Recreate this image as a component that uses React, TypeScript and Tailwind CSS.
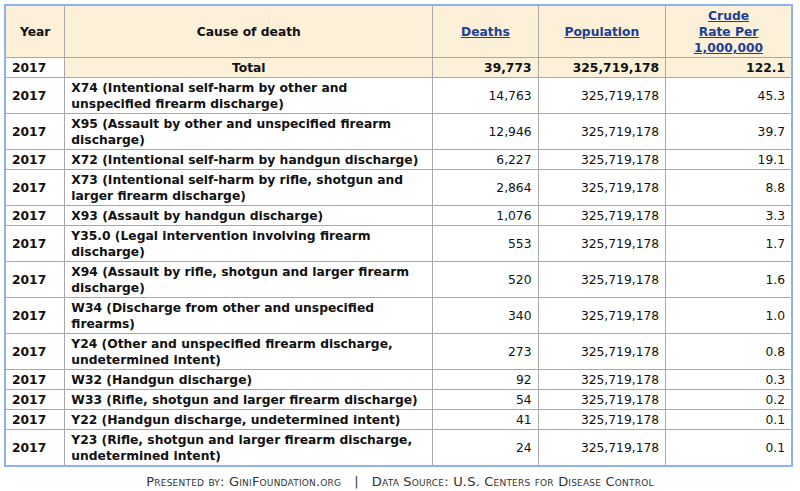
import React from "react";

const rows: [React.ReactNode, string, string][] = [
  [<>X74 (Intentional self-harm by other and<br />unspecified firearm discharge)</>, "14,763", "45.3"],
  [<>X95 (Assault by other and unspecified firearm<br />discharge)</>, "12,946", "39.7"],
  [<>X72 (Intentional self-harm by handgun discharge)</>, "6,227", "19.1"],
  [<>X73 (Intentional self-harm by rifle, shotgun and<br />larger firearm discharge)</>, "2,864", "8.8"],
  [<>X93 (Assault by handgun discharge)</>, "1,076", "3.3"],
  [<>Y35.0 (Legal intervention involving firearm<br />discharge)</>, "553", "1.7"],
  [<>X94 (Assault by rifle, shotgun and larger firearm<br />discharge)</>, "520", "1.6"],
  [<>W34 (Discharge from other and unspecified<br />firearms)</>, "340", "1.0"],
  [<>Y24 (Other and unspecified firearm discharge,<br />undetermined intent)</>, "273", "0.8"],
  [<>W32 (Handgun discharge)</>, "92", "0.3"],
  [<>W33 (Rifle, shotgun and larger firearm discharge)</>, "54", "0.2"],
  [<>Y22 (Handgun discharge, undetermined intent)</>, "41", "0.1"],
  [<>Y23 (Rifle, shotgun and larger firearm discharge,<br />undetermined intent)</>, "24", "0.1"],
];

const cell = "border border-[#a8a8a8] px-[6px] pt-[2px] pb-[1px] leading-[16px]";

export default function App() {
  return (
    <div className="w-[800px] h-[491px] bg-white pt-[4px] pl-[4px]" style={{ fontFamily: '"DejaVu Sans", Verdana, sans-serif' }}>
      <table className="w-[789px] border-collapse border-2 border-[#8fb3e8] text-[12.3px] text-[#111]">
        <colgroup>
          <col className="w-[60px]" />
          <col className="w-[368px]" />
          <col className="w-[106px]" />
          <col className="w-[128px]" />
          <col className="w-[127px]" />
        </colgroup>
        <thead>
          <tr className="bg-[#fdf0d9]">
            <th className={`${cell} text-center font-bold`}>Year</th>
            <th className={`${cell} text-center font-bold`}>Cause of death</th>
            <th className={`${cell} text-center font-bold`}><span className="text-[#1c3f94] underline">Deaths</span></th>
            <th className={`${cell} text-center font-bold`}><span className="text-[#1c3f94] underline">Population</span></th>
            <th className={`${cell} text-center font-bold`}><span className="text-[#1c3f94] underline">Crude<br />Rate Per<br />1,000,000</span></th>
          </tr>
        </thead>
        <tbody>
          <tr className="bg-[#fdf0d9] font-bold">
            <td className={`${cell} bg-white text-left`}>2017</td>
            <td className={`${cell} text-center`}>Total</td>
            <td className={`${cell} text-right`}>39,773</td>
            <td className={`${cell} text-right`}>325,719,178</td>
            <td className={`${cell} text-right`}>122.1</td>
          </tr>
          {rows.map(([cause, deaths, rate], i) => (
            <tr key={i}>
              <td className={`${cell} font-bold text-left`}>2017</td>
              <td className={`${cell} font-bold text-left whitespace-nowrap`}>{cause}</td>
              <td className={`${cell} text-right`}>{deaths}</td>
              <td className={`${cell} text-right`}>325,719,178</td>
              <td className={`${cell} text-right`}>{rate}</td>
            </tr>
          ))}
        </tbody>
      </table>
      <div className="mt-[7px] text-center text-[13px] leading-[16px] text-[#333] tracking-[0.2px] pr-[4px]" style={{ fontVariant: "small-caps" }}>
        Presented by: GiniFoundation.org &nbsp;&nbsp;|&nbsp;&nbsp; Data Source: U.S. Centers for Disease Control
      </div>
    </div>
  );
}
